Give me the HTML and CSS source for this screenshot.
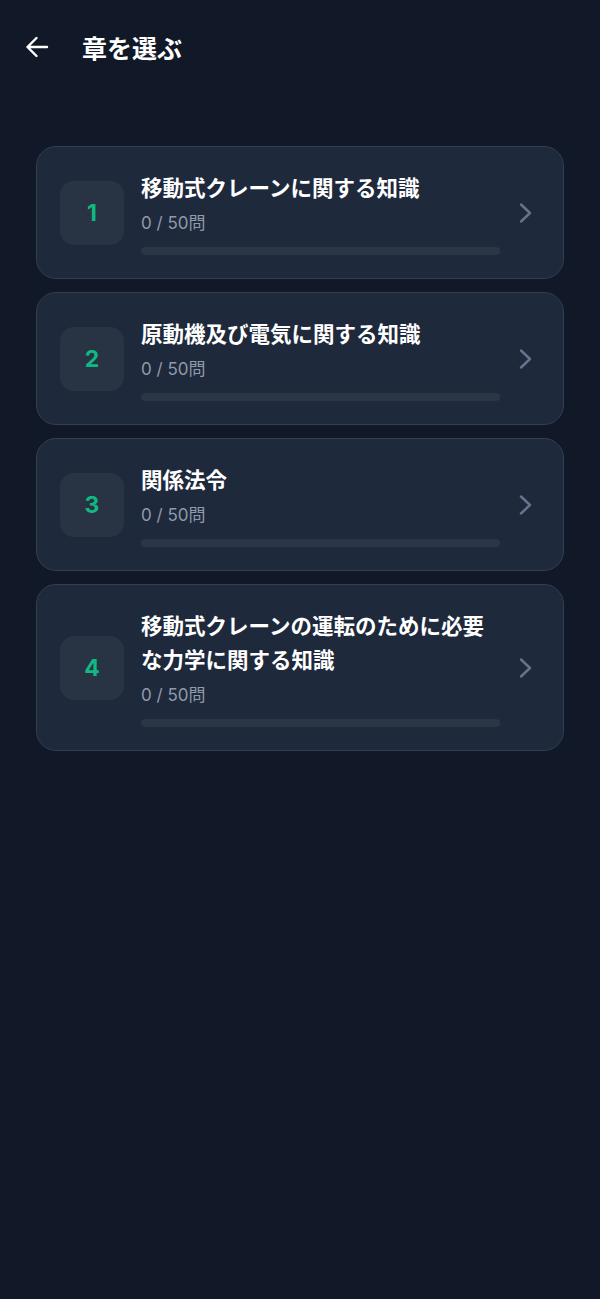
FILE: index.html
```html
<!DOCTYPE html>
<html lang="ja">
<head>
<meta charset="utf-8">
<title>章を選ぶ</title>
<link rel="stylesheet" href="styles.css">
</head>
<body>
<div class="screen">
  <header class="topbar">
    <button class="back" aria-label="戻る">
      <svg width="26" height="26" viewBox="0 0 26 26" fill="none" stroke="#ffffff" stroke-width="2.4" stroke-linecap="round" stroke-linejoin="round"><path d="M23 13H3.5M12.5 4L3.5 13l9 9"/></svg>
    </button>
    <h1 class="title">章を選ぶ</h1>
  </header>

  <main class="list">
    <a class="card">
      <div class="num">1</div>
      <div class="info">
        <div class="name">移動式クレーンに関する知識</div>
        <div class="count">0 / 50問</div>
        <div class="track"><div class="fill" style="width:0%"></div></div>
      </div>
      <svg class="chev" width="24" height="24" viewBox="0 0 24 24" fill="none" stroke="#66738a" stroke-width="2.5" stroke-linecap="round" stroke-linejoin="round"><path d="M8 3.5L17 12l-9 8.5"/></svg>
    </a>
    <a class="card">
      <div class="num">2</div>
      <div class="info">
        <div class="name">原動機及び電気に関する知識</div>
        <div class="count">0 / 50問</div>
        <div class="track"><div class="fill" style="width:0%"></div></div>
      </div>
      <svg class="chev" width="24" height="24" viewBox="0 0 24 24" fill="none" stroke="#66738a" stroke-width="2.5" stroke-linecap="round" stroke-linejoin="round"><path d="M8 3.5L17 12l-9 8.5"/></svg>
    </a>
    <a class="card">
      <div class="num">3</div>
      <div class="info">
        <div class="name">関係法令</div>
        <div class="count">0 / 50問</div>
        <div class="track"><div class="fill" style="width:0%"></div></div>
      </div>
      <svg class="chev" width="24" height="24" viewBox="0 0 24 24" fill="none" stroke="#66738a" stroke-width="2.5" stroke-linecap="round" stroke-linejoin="round"><path d="M8 3.5L17 12l-9 8.5"/></svg>
    </a>
    <a class="card">
      <div class="num">4</div>
      <div class="info">
        <div class="name">移動式クレーンの運転のために必要な力学に関する知識</div>
        <div class="count">0 / 50問</div>
        <div class="track"><div class="fill" style="width:0%"></div></div>
      </div>
      <svg class="chev" width="24" height="24" viewBox="0 0 24 24" fill="none" stroke="#66738a" stroke-width="2.5" stroke-linecap="round" stroke-linejoin="round"><path d="M8 3.5L17 12l-9 8.5"/></svg>
    </a>
  </main>
</div>
</body>
</html>
```

FILE: styles.css
```css
* { box-sizing: border-box; }
html, body {
  margin: 0;
  padding: 0;
  background: #111827;
}
body {
  font-family: "Inter", "Noto Sans CJK JP", sans-serif;
  color: #ffffff;
  min-height: 1299px;
}
.screen {
  min-height: 1299px;
  background: #111827;
}
.topbar {
  display: flex;
  align-items: center;
  height: 94px;
  padding: 0 0 0 24px;
}
.back {
  display: flex;
  align-items: center;
  justify-content: center;
  width: 26px;
  height: 26px;
  padding: 0;
  margin: 0;
  border: none;
  background: none;
}
.title {
  margin: 0 0 0 32px;
  font-family: "Noto Sans CJK JP", sans-serif;
  font-size: 25px;
  font-weight: 700;
  line-height: 32px;
  color: #ffffff;
}
.list {
  display: flex;
  flex-direction: column;
  gap: 13px;
  padding: 52px 36px 0 36px;
}
.card {
  display: flex;
  align-items: center;
  padding: 23px 26px 23px 23px;
  background: #1e293b;
  border: 1px solid #323e51;
  border-radius: 20px;
  text-decoration: none;
  color: inherit;
}
.num {
  flex: none;
  width: 64px;
  height: 64px;
  display: flex;
  align-items: center;
  justify-content: center;
  border-radius: 14px;
  background: #283344;
  color: #10b981;
  font-family: "Inter", sans-serif;
  font-size: 23px;
  font-weight: 700;
}
.info {
  flex: 1;
  min-width: 0;
  margin-left: 17px;
  margin-right: 13px;
}
.name {
  font-family: "Noto Sans CJK JP", sans-serif;
  font-size: 21.5px;
  font-weight: 700;
  line-height: 34px;
  color: #ffffff;
}
.count {
  margin-top: 7px;
  font-family: "Inter", "Noto Sans CJK JP", sans-serif;
  font-size: 17px;
  line-height: 24px;
  color: #8f9aab;
}
.track {
  margin-top: 12px;
  height: 8px;
  border-radius: 4px;
  background: #2b3647;
  overflow: hidden;
}
.fill {
  height: 100%;
  background: #10b981;
}
.chev {
  flex: none;
}
```
